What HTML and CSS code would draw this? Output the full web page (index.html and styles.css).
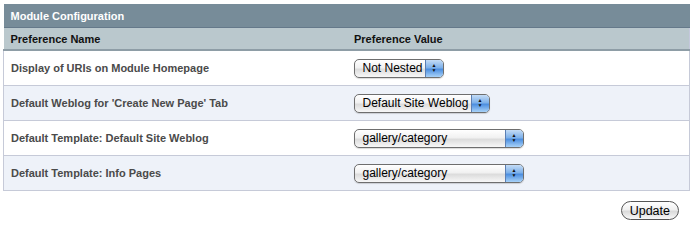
FILE: index.html
```html
<!DOCTYPE html>
<html lang="en">
<head>
    <meta charset="UTF-8">
    <title>Module Configuration</title>
    <link rel="stylesheet" href="styles.css">
</head>
<body>
    <form class="config">
        <table class="prefs">
            <tr>
                <th class="title" colspan="2">Module Configuration</th>
            </tr>
            <tr class="head">
                <th>Preference Name</th>
                <th>Preference Value</th>
            </tr>
            <tr>
                <td class="name">Display of URIs on Module Homepage</td>
                <td><span class="popup w-nested"><span class="label">Not Nested</span><span class="arrows"><i>&#9650;</i><i>&#9660;</i></span></span></td>
            </tr>
            <tr class="alt">
                <td class="name">Default Weblog for 'Create New Page' Tab</td>
                <td><span class="popup w-weblog"><span class="label">Default Site Weblog</span><span class="arrows"><i>&#9650;</i><i>&#9660;</i></span></span></td>
            </tr>
            <tr>
                <td class="name">Default Template: Default Site Weblog</td>
                <td><span class="popup w-tmpl"><span class="label">gallery/category</span><span class="arrows"><i>&#9650;</i><i>&#9660;</i></span></span></td>
            </tr>
            <tr class="alt">
                <td class="name">Default Template: Info Pages</td>
                <td><span class="popup w-tmpl"><span class="label">gallery/category</span><span class="arrows"><i>&#9650;</i><i>&#9660;</i></span></span></td>
            </tr>
        </table>
        <div class="actions">
            <button type="button" class="update">Update</button>
        </div>
    </form>
</body>
</html>
```

FILE: styles.css
```css
body {
    margin: 0;
    padding: 4px 6px 0 3px;
    font-family: "Liberation Sans", Arial, sans-serif;
    background: #fff;
}

.prefs {
    width: 687px;
    border-collapse: collapse;
    table-layout: fixed;
}

.prefs th.title {
    height: 23px;
    padding: 0 7px;
    background: #778c99;
    border-bottom: 1px solid #65798a;
    color: #fff;
    font-size: 11px;
    text-align: left;
}

.prefs tr.head th {
    height: 21px;
    padding: 0 7px;
    background: #bac8cd;
    border-bottom: 2px solid #8e9da6;
    border-right: 1px solid #bac8cd;
    color: #111;
    font-size: 11px;
    text-align: left;
}

.prefs tr.head th:last-child {
    border-right: 1px solid #c4c8dc;
}

.prefs td {
    height: 34px;
    padding: 0 7px;
    border-bottom: 1px solid #c6cad8;
    vertical-align: middle;
}

.prefs td:first-child {
    border-left: 1px solid #c6cad8;
}

.prefs td:last-child {
    border-right: 1px solid #c6cad8;
}

.prefs tr.alt td {
    background: #eef2f9;
}

.name {
    color: #4a4a4a;
    font-size: 11px;
    font-weight: bold;
}

/* aqua style popup menus */
.popup {
    display: inline-flex;
    height: 17px;
    border: 1px solid #6e6e6e;
    border-radius: 5px;
    background: linear-gradient(#ffffff, #f1f1f1 45%, #dcdcdc 55%, #f7f7f7);
    box-shadow: 0 1px 1px rgba(0, 0, 0, 0.15);
    overflow: hidden;
    vertical-align: middle;
}

.popup .label {
    flex: 1;
    padding-left: 8px;
    white-space: nowrap;
    font-family: "Liberation Sans", Arial, sans-serif;
    font-size: 12px;
    line-height: 17px;
    color: #000;
}

.popup .arrows {
    width: 17px;
    display: flex;
    flex-direction: column;
    align-items: center;
    justify-content: center;
    border-left: 1px solid #5b7fb4;
    background: linear-gradient(#c4dcf6, #7eb1ea 45%, #4d8fe0 55%, #a8d2f8);
    color: #111;
}

.popup .arrows i {
    font-style: normal;
    font-size: 5px;
    line-height: 5px;
}

.w-nested { width: 88px; }
.w-weblog { width: 134px; }
.w-tmpl { width: 168px; }

.actions {
    display: flex;
    justify-content: flex-end;
    padding: 10px 11px 0 0;
}

.update {
    height: 19px;
    padding: 0 8px;
    border: 1px solid #555;
    border-radius: 10px;
    background: linear-gradient(#ffffff, #f0f0f0 45%, #dadada 55%, #f8f8f8);
    font-family: "Liberation Sans", Arial, sans-serif;
    font-size: 12.5px;
    color: #000;
}
```
